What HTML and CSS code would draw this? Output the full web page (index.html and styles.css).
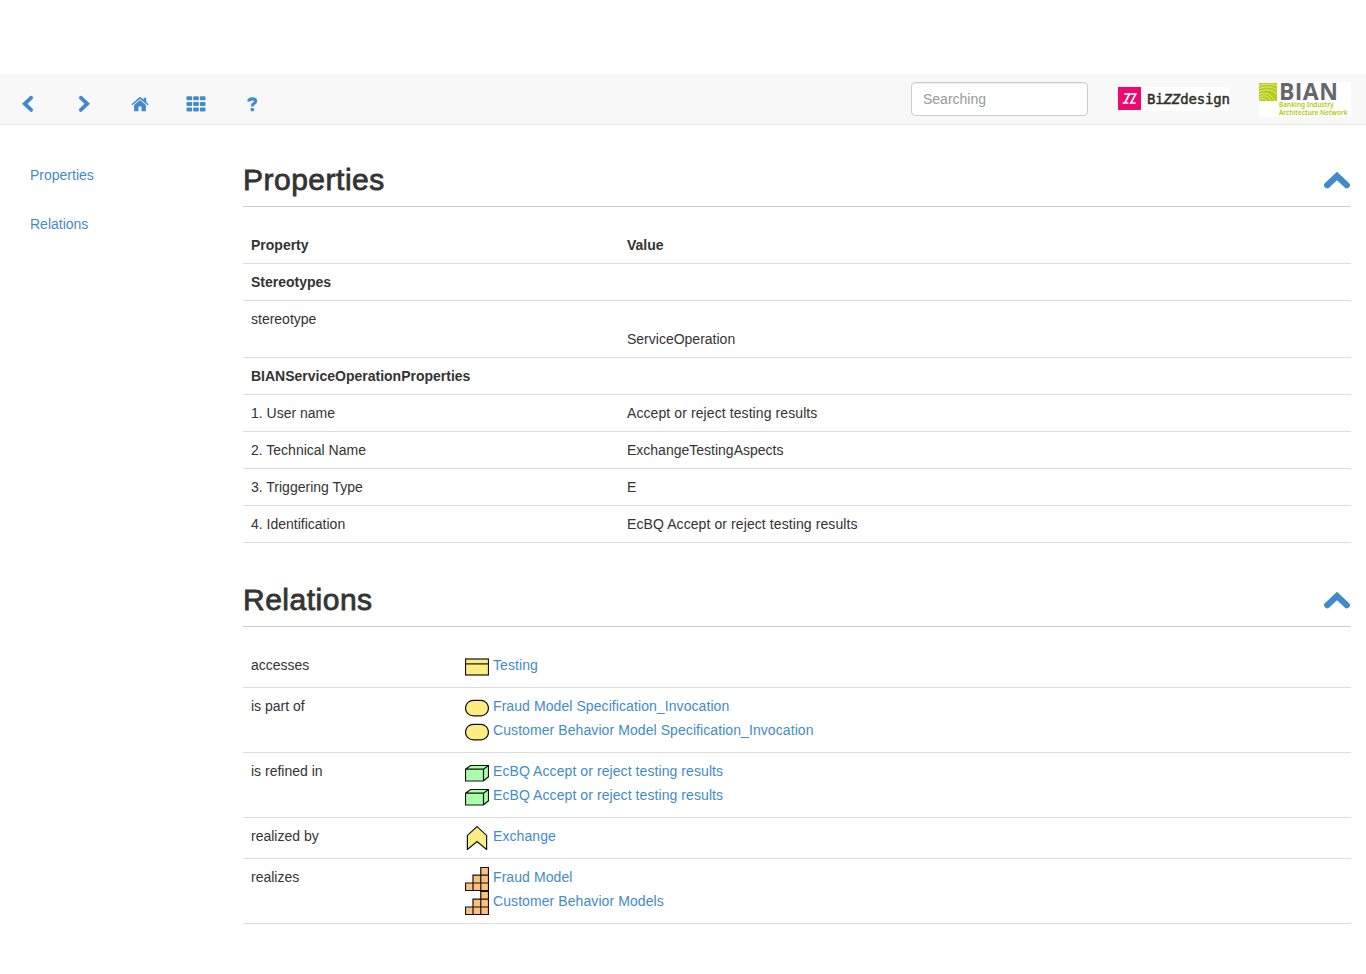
FILE: index.html
```html
<!DOCTYPE html>
<html lang="en">
<head>
<meta charset="utf-8">
<title>Accept or reject testing results</title>
<link rel="stylesheet" href="styles.css">
</head>
<body>
<svg class="defs" aria-hidden="true">
  <symbol id="object" viewBox="0 0 24 24"><rect x=".5" y="4" width="23" height="16"/><path d="M.5 8.9h23"/></symbol>
  <symbol id="service" viewBox="0 0 24 24"><rect x=".5" y="4.300" width="23" height="15.600" rx="7.800"/></symbol>
  <symbol id="box" viewBox="0 0 24 24"><path d="M.5 8.200 5.500 4.500h18v11.300l-5 4.200H.5zM.5 8.200h18V20M18.500 8.200l5-3.700"/></symbol>
  <symbol id="function" viewBox="0 0 24 24"><path d="M12 .6 21.600 9.400V23.500L12 15.500 2.400 23.500V9.400z"/></symbol>
  <symbol id="capability" viewBox="0 0 24 24"><path d="M.5 23.500V16H8V8.200H15.800V.5H23.500V23.500zM8 16V23.500M15.800 8.200V23.500M8 16H23.500M15.800 8.200H23.500"/></symbol>
  <symbol id="chevron" viewBox="0 0 28 18"><path d="M4.200 14.200 14 5 23.800 14.200"/></symbol>
</svg>
<header class="navbar">
  <nav class="tools">
    <a href="#"><svg class="icon stroke" viewBox="0 0 20 20"><path d="M13.200 3.700 6.800 9.800l6.400 6.100"/></svg></a>
    <a href="#"><svg class="icon stroke" viewBox="0 0 20 20"><path d="M6.800 3.700 13.200 9.800 6.800 15.900"/></svg></a>
    <a href="#"><svg class="icon" viewBox="0 0 20 20"><path d="M1.500 10.200 9 3.400q1-.8 2 0l2.600 2.300V3.800h2.600v4.300l2.300 2.100-.9 1.100L10 4.900l-7.600 6.400z"/><path d="M10 6.100 15.900 11v5.500q0 .7-.7.700h-3.700v-4.700h-3v4.700H4.800q-.7 0-.7-.7V11z"/></svg></a>
    <a href="#"><svg class="icon" viewBox="0 0 20 20"><g id="grid"><rect x=".5" y="2.300" width="5.600" height="4" rx=".9"/><rect x="7.200" y="2.300" width="5.600" height="4" rx=".9"/><rect x="13.900" y="2.300" width="5.600" height="4" rx=".9"/></g><use href="#grid" y="5.600"/><use href="#grid" y="11.200"/></svg></a>
    <a href="#"><svg class="icon" viewBox="0 0 20 20"><path class="hook" d="M6.600 7.500Q7.200 4.900 10.300 4.900 13.700 4.900 13.700 7.300 13.700 8.700 12 9.500 10.300 10.300 10.300 12.500"/><rect x="8.600" y="13.900" width="3.400" height="3.300" rx=".7"/></svg></a>
  </nav>
  <input class="search" type="text" placeholder="Searching">
  <div class="bizz">
    <svg class="zz" viewBox="0 0 23 23"><path d="M6 7h5.600L7 16H4.600M11.200 7h6.600L12.800 16h5M11.200 7 6.800 16h3.600"/></svg>
    <span class="bizz-name">Bi<i>ZZ</i>design</span>
  </div>
  <div class="bian">
    <svg class="waves" viewBox="0 0 18 18"><path d="M0 2.500Q10-.5 18 3M0 5.500Q10 1.500 18 7M0 8.500Q10 4 18 11M0 11.500Q9 6.500 16 18M0 14.500Q8 9.500 12 18M0 17Q6 13.500 8 18"/></svg>
    <div class="bian-text"><b>BIAN</b><span>Banking Industry</span><span>Architecture Network</span></div>
  </div>
</header>
<div class="layout">
  <aside class="sidebar"><a href="#properties">Properties</a><a href="#relations">Relations</a></aside>
  <main class="content">
    <section id="properties">
      <div class="section-head"><h2>Properties</h2><svg class="up"><use href="#chevron"/></svg></div>
      <table class="table properties">
        <tr><th>Property</th><th>Value</th></tr>
        <tr><th>Stereotypes</th><td></td></tr>
        <tr><td>stereotype</td><td><br><span>ServiceOperation</span></td></tr>
        <tr><th>BIANServiceOperationProperties</th><td></td></tr>
        <tr><td>1. User name</td><td class="phrase">Accept or reject testing results</td></tr>
        <tr><td>2. Technical Name</td><td>ExchangeTestingAspects</td></tr>
        <tr><td>3. Triggering Type</td><td>E</td></tr>
        <tr><td>4. Identification</td><td class="phrase">EcBQ Accept or reject testing results</td></tr>
      </table>
    </section>
    <section id="relations">
      <div class="section-head"><h2>Relations</h2><svg class="up"><use href="#chevron"/></svg></div>
      <table class="table relations">
        <tr><td>accesses</td><td><a class="item" href="#"><svg class="type yellow"><use href="#object"/></svg>Testing</a></td></tr>
        <tr><td>is part of</td><td><a class="item" href="#"><svg class="type yellow"><use href="#service"/></svg>Fraud Model Specification_Invocation</a><a class="item" href="#"><svg class="type yellow"><use href="#service"/></svg>Customer Behavior Model Specification_Invocation</a></td></tr>
        <tr><td>is refined in</td><td><a class="item" href="#"><svg class="type green"><use href="#box"/></svg>EcBQ Accept or reject testing results</a><a class="item" href="#"><svg class="type green"><use href="#box"/></svg>EcBQ Accept or reject testing results</a></td></tr>
        <tr><td>realized by</td><td><a class="item" href="#"><svg class="type yellow"><use href="#function"/></svg>Exchange</a></td></tr>
        <tr><td>realizes</td><td><a class="item" href="#"><svg class="type orange"><use href="#capability"/></svg>Fraud Model</a><a class="item" href="#"><svg class="type orange"><use href="#capability"/></svg>Customer Behavior Models</a></td></tr>
      </table>
    </section>
  </main>
</div>
</body>
</html>
```
FILE: styles.css
```css
* { box-sizing: border-box; }
body {
  margin: 0;
  padding-top: 74px;
  background: #fff;
  color: #333;
  font: 14px/20px "Liberation Sans", Arial, sans-serif;
}
a { color: #428bca; text-decoration: none; }
.defs { display: none; }
.navbar {
  display: flex;
  align-items: flex-start;
  height: 51px;
  padding: 0 15px 0 0;
  background: #f8f8f8;
  border-bottom: 1px solid #e7e7e7;
}
.tools { display: flex; flex: 1; padding: 20px 0 0 18px; gap: 36px; }
.tools a { height: 20px; }
.icon { display: block; width: 20px; height: 20px; fill: #428bca; }
.icon.stroke { fill: none; stroke: #428bca; stroke-width: 3.800; stroke-linecap: round; }
.icon .hook { fill: none; stroke: #428bca; stroke-width: 3.200; }
.search {
  width: 177px;
  height: 34px;
  margin: 8px 30px 0 0;
  padding: 6px 11px;
  border: 1px solid #ccc;
  border-radius: 4px;
  background: #fff;
  box-shadow: inset 0 1px 1px rgba(0, 0, 0, .075);
  font: inherit;
}
.search::placeholder { color: #999; opacity: 1; }
.bizz { display: flex; width: 111px; height: 24px; margin: 13px 30px 0 0; background: #fff; }
.zz { flex: none; width: 23px; height: 23px; background: #ee0a6c; fill: none; stroke: #fff; stroke-width: 1.600; }
.bizz-name {
  padding-left: 6px;
  color: #33312b;
  font: 14px/24px "DejaVu Sans Mono", monospace;
  letter-spacing: -.15px;
  white-space: nowrap;
  -webkit-text-stroke: .5px #33312b;
}
.bian { display: flex; width: 92px; height: 35px; margin-top: 8px; background: #fff; }
.waves { flex: none; width: 18px; height: 18px; margin-top: 1px; background: #b5cc18; fill: none; stroke: #f0f5b4; stroke-width: .7; }
.bian-text { padding: 0 0 0 2px; color: #b5c900; font: 600 6.800px/8px "Noto Sans", sans-serif; white-space: nowrap; }
.bian-text b { display: block; height: 19px; color: #66676b; font: bold 23px/18px "Open Sans", sans-serif; letter-spacing: .4px; }
.bian-text span { display: block; height: 8px; font-size: 6.500px; }
.layout { display: flex; padding-right: 15px; }
.sidebar { display: flex; flex: none; flex-direction: column; gap: 29px; width: 243px; padding: 40px 0 0 30px; }
.content { flex: 1; padding-top: 38px; }
section + section { margin-top: 40px; }
.section-head {
  display: flex;
  justify-content: space-between;
  height: 44px;
  margin-bottom: 20px;
  border-bottom: 1px solid #ccc;
}
h2 { margin: 0; font-size: 30px; line-height: 33px; font-weight: 400; letter-spacing: .5px; -webkit-text-stroke: .8px #333; }
.up { width: 28px; height: 18px; margin: 8px 0 0; fill: none; stroke: #428bca; stroke-width: 6.200; stroke-linecap: round; }
.table { width: 100%; border-collapse: separate; border-spacing: 0; table-layout: fixed; }
.table td, .table th { padding: 8px; border-bottom: 1px solid #ddd; text-align: left; vertical-align: top; height: 37px; }
.properties th:first-child { width: 376px; }
.relations td:first-child { width: 214px; }
.phrase { letter-spacing: .09px; }
.item { display: flex; gap: 4px; height: 24px; letter-spacing: .08px; }
.type { flex: none; width: 24px; height: 24px; stroke: #111; stroke-width: 1.200; }
.yellow { fill: #fced83; }
.green { fill: #aaffaa; }
.orange { fill: #ffc07c; }
```
